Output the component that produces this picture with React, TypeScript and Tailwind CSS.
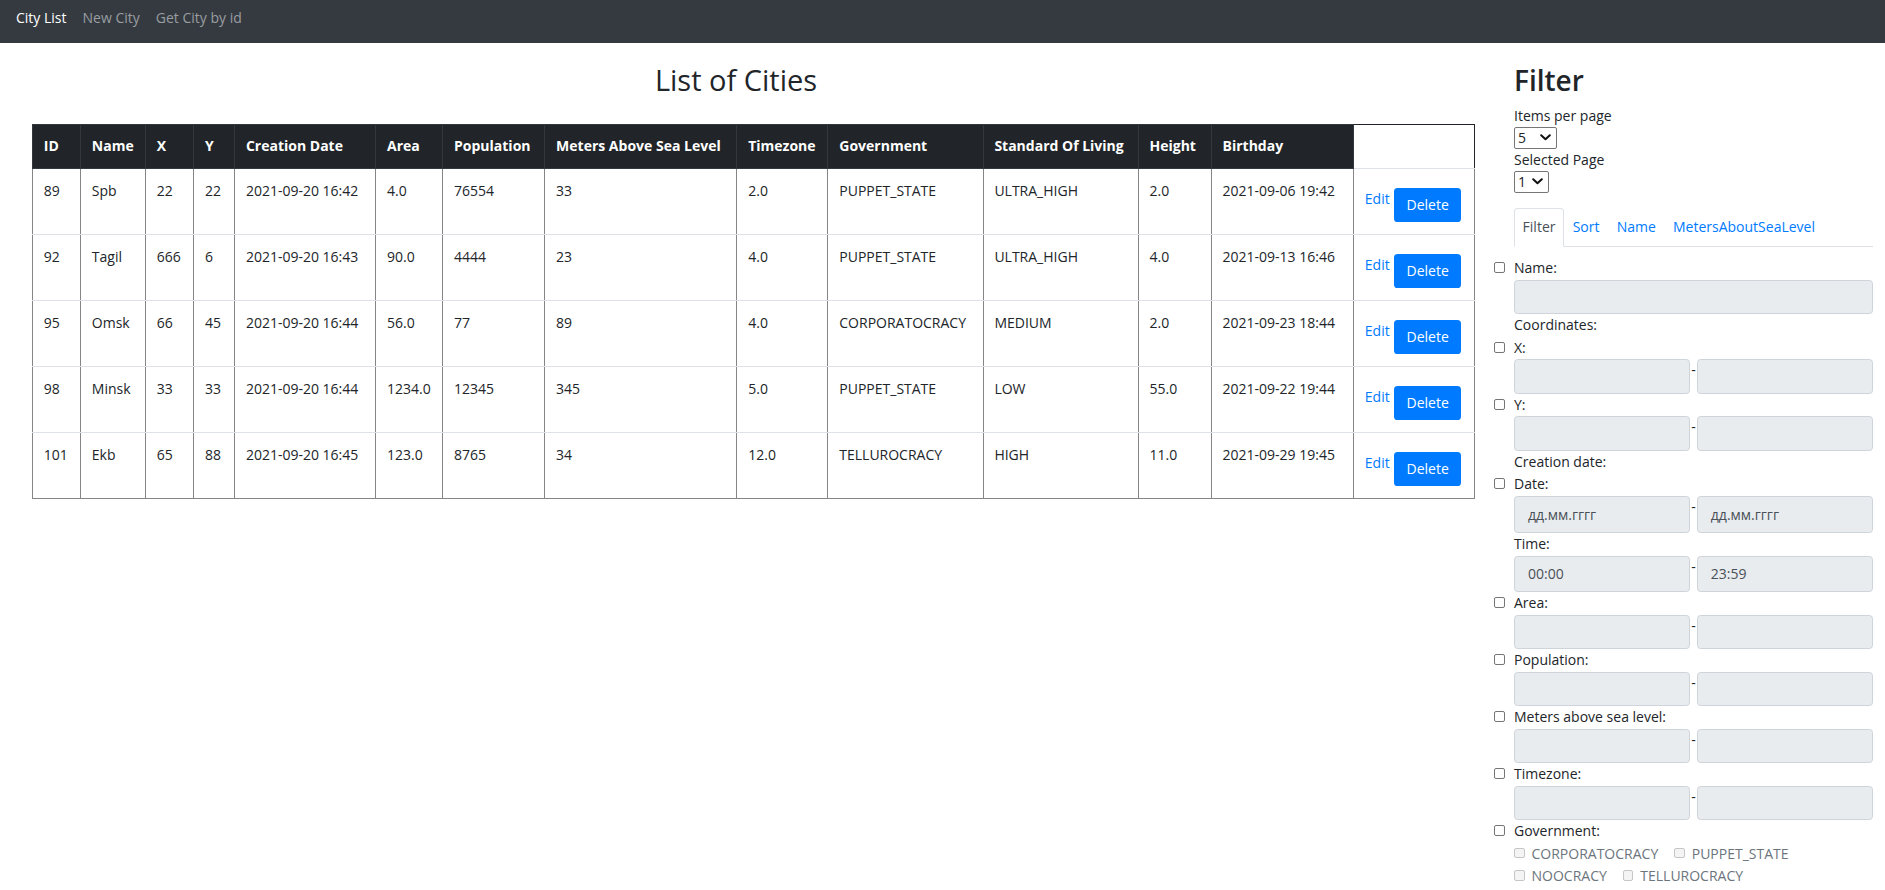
import React from "react";

const cols = [48, 65, 48, 41, 141, 67, 102, 192, 91, 155, 155, 73, 142, 121];
const heads = [
  "ID",
  "Name",
  "X",
  "Y",
  "Creation Date",
  "Area",
  "Population",
  "Meters Above Sea Level",
  "Timezone",
  "Government",
  "Standard Of Living",
  "Height",
  "Birthday",
];
const rows = [
  ["89", "Spb", "22", "22", "2021-09-20 16:42", "4.0", "76554", "33", "2.0", "PUPPET_STATE", "ULTRA_HIGH", "2.0", "2021-09-06 19:42"],
  ["92", "Tagil", "666", "6", "2021-09-20 16:43", "90.0", "4444", "23", "4.0", "PUPPET_STATE", "ULTRA_HIGH", "4.0", "2021-09-13 16:46"],
  ["95", "Omsk", "66", "45", "2021-09-20 16:44", "56.0", "77", "89", "4.0", "CORPORATOCRACY", "MEDIUM", "2.0", "2021-09-23 18:44"],
  ["98", "Minsk", "33", "33", "2021-09-20 16:44", "1234.0", "12345", "345", "5.0", "PUPPET_STATE", "LOW", "55.0", "2021-09-22 19:44"],
  ["101", "Ekb", "65", "88", "2021-09-20 16:45", "123.0", "8765", "34", "12.0", "TELLUROCRACY", "HIGH", "11.0", "2021-09-29 19:45"],
];

function Chevron() {
  return (
    <svg width="11" height="7" viewBox="0 0 11 7" className="block">
      <polyline points="1.2,1.2 5.5,5.3 9.8,1.2" fill="none" stroke="#111" strokeWidth="2" strokeLinecap="round" strokeLinejoin="round" />
    </svg>
  );
}

function Check() {
  return <span className="-ml-[20px] mr-[9px] mt-[5px] block h-[11px] w-[11px] shrink-0 rounded-[2px] border border-[#767676] bg-white" />;
}

function CheckLabel({ text }: { text: string }) {
  return (
    <div className="flex h-[22.6px] items-start leading-[22.6px]">
      <Check />
      <span>{text}</span>
    </div>
  );
}

function PlainLabel({ text }: { text: string }) {
  return <div className="h-[22.6px] leading-[22.6px]">{text}</div>;
}

function Box({ h, text }: { h: string; text?: string }) {
  return (
    <div className={`flex flex-1 items-center rounded-[3.6px] border border-[#ced4da] bg-[#e9ecef] pl-[13px] text-[#495057] ${h}`}>
      {text}
    </div>
  );
}

function Range({ h = "h-[34.4px]", a, b }: { h?: string; a?: string; b?: string }) {
  return (
    <div className="flex items-start">
      <Box h={h} text={a} />
      <span className="w-[6.6px] text-center leading-[21.6px]">-</span>
      <Box h={h} text={b} />
    </div>
  );
}

function GovOpt({ text }: { text: string }) {
  return (
    <span className="mr-[16px] flex items-start">
      <span className="mt-[5px] mr-[7px] block h-[10.5px] w-[10.5px] rounded-[2px] border border-[#c6c6c6] bg-[#f4f4f4]" />
      <span>{text}</span>
    </span>
  );
}

export default function App() {
  return (
    <div className="min-h-screen bg-white font-['Open_Sans',sans-serif] text-[14px] leading-[21.6px] text-[#212529]">
      <nav className="flex h-[43px] items-start bg-[#343a40] pl-[8px] pt-[7px]">
        <a className="px-[8px] text-white">City List</a>
        <a className="px-[8px] text-[#9a9da0]">New City</a>
        <a className="px-[8px] text-[#9a9da0]">Get City by id</a>
      </nav>
      <div className="flex">
        <div className="w-[1472px] shrink-0">
          <h2 className="mt-[20px] mb-[26px] text-center text-[29px] leading-[34.6px] font-normal">List of Cities</h2>
          <table className="ml-[32px] w-[1443px] table-fixed border-collapse">
            <colgroup>
              {cols.map((w, i) => (
                <col key={i} style={{ width: w }} />
              ))}
            </colgroup>
            <thead>
              <tr>
                {heads.map((h) => (
                  <th
                    key={h}
                    className="border border-[#32383e] bg-[#212529] p-[10.8px] text-left align-top font-bold whitespace-nowrap text-white"
                  >
                    {h}
                  </th>
                ))}
                <th className="border-t border-r border-b border-t-[#212529] border-r-[#212529] border-b-[#dee2e6] bg-white" />
              </tr>
            </thead>
            <tbody>
              {rows.map((r, ri) => {
                const last = ri === rows.length - 1;
                const b = last ? "border-b-[#858585]" : "border-b-[#dee2e6]";
                return (
                  <tr key={ri}>
                    {r.map((c, ci) => (
                      <td
                        key={ci}
                        className={`border-x border-b border-x-[#858585] ${b} p-[10.8px] align-top whitespace-nowrap`}
                      >
                        {c}
                      </td>
                    ))}
                    <td className={`border-x border-b border-x-[#858585] ${b} px-[11px] pt-[10.8px] pb-[11.9px] align-top`}>
                      <div className="mt-[8px] flex items-start gap-[4.6px]">
                        <a className="text-[#007bff]">Edit</a>
                        <button className="flex h-[34.4px] w-[66.7px] items-center justify-center rounded-[3.6px] bg-[#007bff] text-white">
                          Delete
                        </button>
                      </div>
                    </td>
                  </tr>
                );
              })}
            </tbody>
          </table>
        </div>
        <div className="w-[401px] shrink-0 pl-[42px]">
          <h2 className="mt-[20px] mb-[7.2px] text-[28px] leading-[34.6px] font-semibold">Filter</h2>
          <div>Items per page</div>
          <div className="mt-[0.6px] flex h-[21.7px] w-[43px] items-center justify-between rounded-[2px] border border-[#767676] pr-[5px] pl-[3px] leading-none">
            <span>5</span>
            <Chevron />
          </div>
          <div>Selected Page</div>
          <div className="mt-[0.6px] flex h-[21.7px] w-[35px] items-center justify-between rounded-[2px] border border-[#767676] pr-[5px] pl-[3px] leading-none">
            <span>1</span>
            <Chevron />
          </div>
          <div className="mt-[15.6px] flex border-b border-[#dee2e6]">
            <span className="-mb-px rounded-t-[3.6px] border border-[#dee2e6] border-b-white bg-white px-[7.6px] py-[7.2px] text-[#495057]">
              Filter
            </span>
            <span className="border border-transparent px-[7.6px] py-[7.2px] text-[#007bff]">Sort</span>
            <span className="border border-transparent px-[7.6px] py-[7.2px] text-[#007bff]">Name</span>
            <span className="border border-transparent px-[7.6px] py-[7.2px] text-[#007bff]">MetersAboutSeaLevel</span>
          </div>
          <div className="mt-[10px] flex flex-col">
            <CheckLabel text="Name:" />
            <Box h="h-[34.4px] flex-none" />
            <PlainLabel text="Coordinates:" />
            <CheckLabel text="X:" />
            <Range />
            <CheckLabel text="Y:" />
            <Range />
            <PlainLabel text="Creation date:" />
            <CheckLabel text="Date:" />
            <Range h="h-[37.4px]" a="дд.мм.гггг" b="дд.мм.гггг" />
            <PlainLabel text="Time:" />
            <Range h="h-[36.4px]" a="00:00" b="23:59" />
            <CheckLabel text="Area:" />
            <Range />
            <CheckLabel text="Population:" />
            <Range />
            <CheckLabel text="Meters above sea level:" />
            <Range />
            <CheckLabel text="Timezone:" />
            <Range />
            <CheckLabel text="Government:" />
            <div className="flex h-[22.6px] leading-[22.6px] text-[#6c757d]">
              <GovOpt text="CORPORATOCRACY" />
              <GovOpt text="PUPPET_STATE" />
            </div>
            <div className="flex h-[22.6px] leading-[22.6px] text-[#6c757d]">
              <GovOpt text="NOOCRACY" />
              <GovOpt text="TELLUROCRACY" />
            </div>
          </div>
        </div>
      </div>
    </div>
  );
}
